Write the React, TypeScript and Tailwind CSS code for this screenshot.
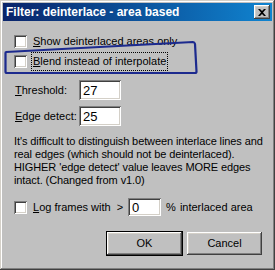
const raised =
  "shadow-[inset_-1px_-1px_#404040,inset_1px_1px_#ffffff,inset_-2px_-2px_#808080,inset_2px_2px_#d4d0c8]";
const sunken =
  "shadow-[inset_1px_1px_#808080,inset_-1px_-1px_#ffffff,inset_2px_2px_#404040,inset_-2px_-2px_#d4d0c8]";

function Check() {
  return <div className={`w-[13px] h-[13px] shrink-0 bg-white ${sunken}`} />;
}

function Field({ value, className }: { value: string; className: string }) {
  return (
    <div className={`bg-white ${sunken} flex items-center pl-[4px] text-[13px] ${className}`}>
      {value}
    </div>
  );
}

export default function App() {
  return (
    <div
      className="relative w-[275px] h-[270px] bg-[#c0c0c0] p-[3px] flex flex-col text-black shadow-[inset_-1px_-1px_#404040,inset_1px_1px_#d4d0c8,inset_-2px_-2px_#808080,inset_2px_2px_#ffffff]"
      style={{ fontFamily: '"Liberation Sans", Arial, sans-serif' }}
    >
      {/* title bar */}
      <div className="h-[18px] flex items-center justify-between pl-[3px] pr-[2px] bg-gradient-to-r from-[#0a246a] to-[#1084d0]">
        <span className="text-white font-bold text-[12px] leading-none">Filter: deinterlace - area based</span>
        <div className={`w-[16px] h-[14px] bg-[#c0c0c0] ${raised} flex items-center justify-center`}>
          <svg width="8" height="7" viewBox="0 0 8 7">
            <path d="M0 0h2l2 2 2-2h2L5 3.5 8 7H6L4 5 2 7H0l3-3.5z" fill="#000" />
          </svg>
        </div>
      </div>

      {/* body */}
      <div className="flex flex-col pl-[11px] pr-[10px] text-[11px] leading-[13px]">
        <div className="flex items-center gap-[6px] mt-[14px] h-[13px]">
          <Check />
          <span>
            <u>S</u>how deinterlaced areas only
          </span>
        </div>
        <div className="flex items-center gap-[5px] mt-[7px] h-[13px]">
          <Check />
          <span className="outline-1 outline-dotted outline-black px-[1px] py-[2px]">
            <u>B</u>lend instead of interpolate
          </span>
        </div>

        <div className="flex items-center mt-[12px] h-[20px]">
          <span className="w-[65px] pl-[1px]">
            <u>T</u>hreshold:
          </span>
          <Field value="27" className="w-[42px] h-[20px]" />
        </div>
        <div className="flex items-center mt-[6px] h-[20px]">
          <span className="w-[65px] pl-[1px]">
            <u>E</u>dge detect:
          </span>
          <Field value="25" className="w-[42px] h-[20px]" />
        </div>

        <p className="mt-[9px] leading-[13px] whitespace-nowrap tracking-[-0.1px]">
          It's difficult to distinguish between interlace lines and
          <br />
          real edges (which should not be deinterlaced).
          <br />
          HIGHER 'edge detect' value leaves MORE edges
          <br />
          intact. (Changed from v1.0)
        </p>

        <div className="flex items-center mt-[11px] h-[18px] whitespace-nowrap">
          <Check />
          <span className="ml-[6px]">
            <u>L</u>og frames with
          </span>
          <span className="ml-[6px]">&gt;</span>
          <Field value="0" className="w-[33px] h-[18px] ml-[5px]" />
          <span className="ml-[5px]">%</span>
          <span className="ml-[4px]">interlaced area</span>
        </div>

        <div className="flex justify-end gap-[4px] mt-[15px]">
          <div className="border border-black">
            <div className={`w-[75px] h-[23px] ${raised} flex items-center justify-center`}>OK</div>
          </div>
          <div className={`w-[75px] h-[23px] mt-[1px] ${raised} flex items-center justify-center`}>Cancel</div>
        </div>
      </div>

      {/* hand-drawn annotation */}
      <svg className="absolute left-0 top-0 pointer-events-none" width="275" height="270">
        <path
          d="M6 52 L193 42 Q194.5 42 195 44 L196.5 71.5 Q196.5 73 195 73 L7 73 Q5.5 73 5.5 71.5 L5.5 53 Q5.5 52 6 52 Z"
          fill="none"
          stroke="#1c2a8e"
          strokeWidth="2.2"
        />
      </svg>
    </div>
  );
}
